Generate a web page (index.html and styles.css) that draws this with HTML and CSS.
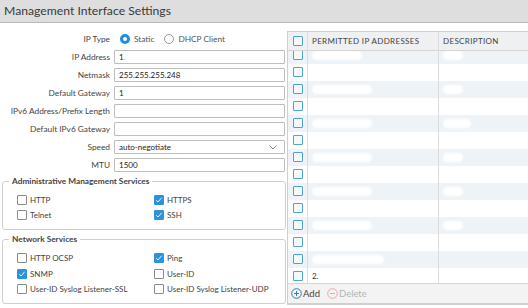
FILE: index.html
```html
<!DOCTYPE html>
<html lang="en">
<head>
  <meta charset="UTF-8" />
  <title>Management Interface Settings</title>
  <link rel="stylesheet" href="styles.css">
</head>
<body>
  <div class="titlebar">Management Interface Settings</div>
  <div class="content">
    <div class="form">
      <div class="row">
        <label>IP Type</label>
        <span class="radio checked"></span><span class="opt">Static</span>
        <span class="radio"></span><span class="opt">DHCP Client</span>
      </div>
      <div class="row">
        <label>IP Address</label>
        <div class="field">1<span class="dim">.</span></div>
      </div>
      <div class="row">
        <label>Netmask</label>
        <div class="field">255.255.255.248</div>
      </div>
      <div class="row">
        <label>Default Gateway</label>
        <div class="field">1</div>
      </div>
      <div class="row">
        <label>IPv6 Address/Prefix Length</label>
        <div class="field"></div>
      </div>
      <div class="row">
        <label>Default IPv6 Gateway</label>
        <div class="field"></div>
      </div>
      <div class="row">
        <label>Speed</label>
        <div class="field select">auto-negotiate
          <svg class="chevron" width="8" height="5" viewBox="0 0 8 5"><path d="M0.5 0.5 L4 4 L7.5 0.5" fill="none" stroke="#888" stroke-width="1"/></svg>
        </div>
      </div>
      <div class="row">
        <label>MTU</label>
        <div class="field">1500</div>
      </div>

      <fieldset class="group">
        <legend>Administrative Management Services</legend>
        <div class="checks">
          <div class="check"><span class="box"></span>HTTP</div>
          <div class="check"><span class="box on"></span>HTTPS</div>
          <div class="check"><span class="box"></span>Telnet</div>
          <div class="check"><span class="box on"></span>SSH</div>
        </div>
      </fieldset>

      <fieldset class="group">
        <legend>Network Services</legend>
        <div class="checks">
          <div class="check"><span class="box"></span>HTTP OCSP</div>
          <div class="check"><span class="box on"></span>Ping</div>
          <div class="check"><span class="box on"></span>SNMP</div>
          <div class="check"><span class="box"></span>User-ID</div>
          <div class="check"><span class="box"></span>User-ID Syslog Listener-SSL</div>
          <div class="check"><span class="box"></span>User-ID Syslog Listener-UDP</div>
        </div>
      </fieldset>
    </div>

    <div class="ip-table">
      <div class="thead">
        <div class="c-sel"><span class="tbox"></span></div>
        <div class="c-ip">PERMITTED IP ADDRESSES</div>
        <div class="c-desc">DESCRIPTION</div>
      </div>
      <div class="tbody">
        <div class="rows">
          <div class="tr"><div class="c-sel"><span class="tbox"></span></div><div class="c-ip"><span class="smear w50"></span></div><div class="c-desc"><span class="smear w20"></span></div></div>
          <div class="tr"><div class="c-sel"><span class="tbox"></span></div><div class="c-ip"></div><div class="c-desc"></div></div>
          <div class="tr"><div class="c-sel"><span class="tbox"></span></div><div class="c-ip"><span class="smear w60"></span></div><div class="c-desc"><span class="smear w20"></span></div></div>
          <div class="tr"><div class="c-sel"><span class="tbox"></span></div><div class="c-ip"></div><div class="c-desc"></div></div>
          <div class="tr"><div class="c-sel"><span class="tbox"></span></div><div class="c-ip"><span class="smear w60"></span></div><div class="c-desc"><span class="smear w30"></span></div></div>
          <div class="tr"><div class="c-sel"><span class="tbox"></span></div><div class="c-ip"></div><div class="c-desc"></div></div>
          <div class="tr"><div class="c-sel"><span class="tbox"></span></div><div class="c-ip"><span class="smear w60"></span></div><div class="c-desc"><span class="smear w20"></span></div></div>
          <div class="tr"><div class="c-sel"><span class="tbox"></span></div><div class="c-ip"></div><div class="c-desc"></div></div>
          <div class="tr"><div class="c-sel"><span class="tbox"></span></div><div class="c-ip"><span class="smear w60"></span></div><div class="c-desc"><span class="smear w20"></span></div></div>
          <div class="tr"><div class="c-sel"><span class="tbox"></span></div><div class="c-ip"></div><div class="c-desc"></div></div>
          <div class="tr"><div class="c-sel"><span class="tbox"></span></div><div class="c-ip"><span class="smear w60"></span></div><div class="c-desc"><span class="smear w20"></span></div></div>
          <div class="tr"><div class="c-sel"><span class="tbox"></span></div><div class="c-ip"></div><div class="c-desc"></div></div>
          <div class="tr"><div class="c-sel"><span class="tbox"></span></div><div class="c-ip"><span class="smear w70"></span></div><div class="c-desc"></div></div>
          <div class="tr"><div class="c-sel"><span class="tbox"></span></div><div class="c-ip">2.</div><div class="c-desc"></div></div>
        </div>
      </div>
      <div class="tfoot">
        <span class="action">
          <svg width="11" height="11" viewBox="0 0 11 11"><circle cx="5.5" cy="5.5" r="4.8" fill="none" stroke="#2f7fb8" stroke-width="1"/><path d="M5.5 3 V8 M3 5.5 H8" stroke="#2f7fb8" stroke-width="1"/></svg>Add
        </span>
        <span class="action disabled">
          <svg width="11" height="11" viewBox="0 0 11 11"><circle cx="5.5" cy="5.5" r="4.8" fill="none" stroke="#e8a8a8" stroke-width="1"/><path d="M3 5.5 H8" stroke="#e8a8a8" stroke-width="1"/></svg>Delete
        </span>
      </div>
    </div>
  </div>
</body>
</html>
```

FILE: styles.css
```css
html, body {
  margin: 0;
  padding: 0;
  width: 528px;
  height: 308px;
  overflow: hidden;
  background: #fff;
  font-family: Lato, "Open Sans", sans-serif;
  color: #333;
}

.titlebar {
  height: 22px;
  line-height: 22px;
  padding-left: 4px;
  background: #dedede;
  border-bottom: 1px solid #b9b9b9;
  font-size: 12.2px;
  color: #3a3a3a;
}

.content {
  display: flex;
  padding-top: 7px;
}

/* left form */
.form {
  width: 284px;
  padding-left: 2px;
  padding-top: 2px;
  flex-shrink: 0;
}

.row {
  display: flex;
  align-items: center;
  height: 14px;
  margin-bottom: 4px;
  font-size: 8.3px;
}

.row label {
  width: 108px;
  margin-right: 4px;
  text-align: right;
  color: #444;
}

.field {
  position: relative;
  box-sizing: border-box;
  width: 171px;
  height: 14px;
  line-height: 12px;
  padding: 0 4px;
  border: 1px solid #bdbdbd;
  border-radius: 1px;
  font-size: 8px;
  color: #222;
}

.field .dim {
  color: #aaa;
}

.chevron {
  position: absolute;
  right: 7px;
  top: 4px;
}

.radio {
  box-sizing: border-box;
  width: 10px;
  height: 10px;
  border-radius: 50%;
  border: 1px solid #9a9a9a;
  margin: 0 4px 0 6px;
}

.radio.checked {
  border: 3px solid #1f8ee0;
  background: #fff;
}

.opt {
  color: #555;
  margin-right: 4px;
}

/* fieldsets */
.group {
  margin: 0 0 4px 0;
  padding: 9px 0 9px 14px;
  border: 1px solid #cfcfcf;
  border-radius: 3px;
}

.group + .group .checks {
  row-gap: 5.5px;
}

.group legend {
  padding: 0 3px;
  margin-left: -8px;
  font-size: 8.3px;
  font-weight: bold;
  color: #444;
}

.checks {
  display: grid;
  grid-template-columns: 137px 1fr;
  row-gap: 5px;
  font-size: 8px;
  color: #444;
}

.check {
  display: flex;
  align-items: center;
  height: 10px;
}

.box {
  box-sizing: border-box;
  width: 10px;
  height: 10px;
  margin-right: 3px;
  border: 1px solid #8a8a8a;
  border-radius: 1px;
  background: #fff;
}

.box.on {
  border-color: #2a93dc;
  background: #2a93dc url("data:image/svg+xml,%3Csvg xmlns='http://www.w3.org/2000/svg' width='10' height='10'%3E%3Cpath d='M2.2 5.2 L4 7 L7.6 2.8' fill='none' stroke='white' stroke-width='0.9'/%3E%3C/svg%3E") no-repeat center;
}

/* right table */
.ip-table {
  flex: 1;
  margin-left: 1px;
  margin-top: 1px;
  border: 1px solid #cfcfcf;
  border-right: none;
  display: flex;
  flex-direction: column;
  height: 272px;
}

.thead, .tr {
  display: flex;
}

.thead {
  height: 18px;
  background: #eef0f1;
  border-bottom: 1px solid #d6d6d6;
  font-size: 8px;
  letter-spacing: 0.35px;
  color: #444;
}

.thead > div, .tr > div {
  display: flex;
  align-items: center;
}

.c-sel {
  width: 19px;
  justify-content: center;
  border-right: 1px solid #dcdcdc;
}

.c-ip {
  width: 126px;
  padding-left: 4px;
  border-right: 1px solid #dcdcdc;
}

.c-desc {
  flex: 1;
  padding-left: 4px;
}

.tbox {
  box-sizing: border-box;
  width: 10px;
  height: 10px;
  border: 1.5px solid #4ea4cf;
  border-radius: 1px;
  background: #f4f8fa;
}

.tbody {
  height: 233px;
  overflow: hidden;
}

.rows {
  margin-top: -4px;
}

.tr {
  height: 17px;
  font-size: 8px;
  color: #333;
}

.tr:nth-child(odd) {
  background: #edf3f6;
}

.smear {
  display: block;
  height: 9px;
  background: #fff;
  border-radius: 5px;
  filter: blur(0.8px);
}

.w20 { width: 20px; }
.w30 { width: 28px; }
.w50 { width: 50px; }
.w60 { width: 60px; }
.w70 { width: 72px; }

.tfoot {
  height: 19px;
  display: flex;
  align-items: center;
  padding-left: 3px;
  background: #f3f3f3;
  border-top: 1px solid #d6d6d6;
  border-bottom: 1px solid #cfcfcf;
  font-size: 9.5px;
}

.action {
  display: flex;
  align-items: center;
  margin-right: 7px;
  color: #444;
}

.action svg {
  margin-right: 1px;
}

.action.disabled {
  color: #b5b5b5;
}
```
